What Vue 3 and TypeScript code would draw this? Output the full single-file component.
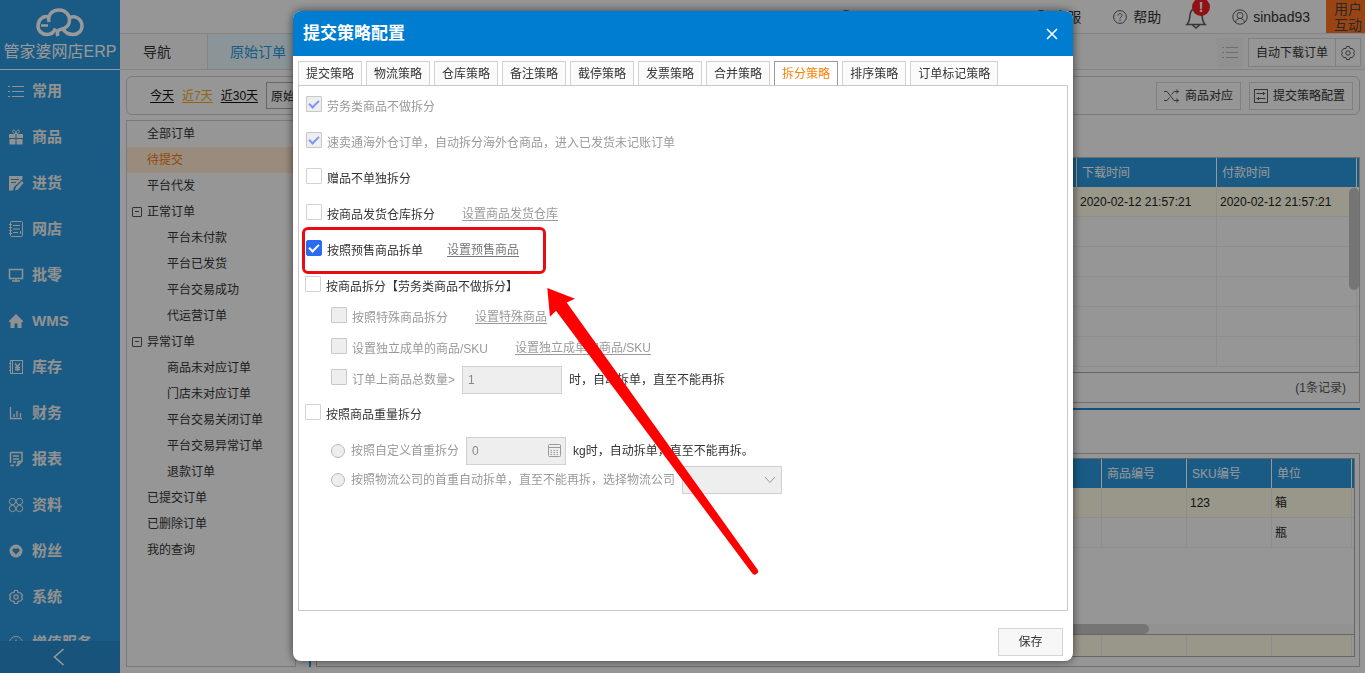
<script setup lang="ts">
import { ref } from 'vue'

interface NavItem { label: string; icon: string }
interface TreeNode { label: string; level: number; group?: boolean; active?: boolean }

const navItems: NavItem[] = [
  { label: '常用', icon: 'list' },
  { label: '商品', icon: 'gift' },
  { label: '进货', icon: 'edit' },
  { label: '网店', icon: 'book' },
  { label: '批零', icon: 'monitor' },
  { label: 'WMS', icon: 'home' },
  { label: '库存', icon: 'stock' },
  { label: '财务', icon: 'chart' },
  { label: '报表', icon: 'report' },
  { label: '资料', icon: 'clover' },
  { label: '粉丝', icon: 'heart' },
  { label: '系统', icon: 'gear' },
  { label: '增值服务', icon: 'plus' },
]

const tree: TreeNode[] = [
  { label: '全部订单', level: 1 },
  { label: '待提交', level: 1, active: true },
  { label: '平台代发', level: 1 },
  { label: '正常订单', level: 1, group: true },
  { label: '平台未付款', level: 2 },
  { label: '平台已发货', level: 2 },
  { label: '平台交易成功', level: 2 },
  { label: '代运营订单', level: 2 },
  { label: '异常订单', level: 1, group: true },
  { label: '商品未对应订单', level: 2 },
  { label: '门店未对应订单', level: 2 },
  { label: '平台交易关闭订单', level: 2 },
  { label: '平台交易异常订单', level: 2 },
  { label: '退款订单', level: 2 },
  { label: '已提交订单', level: 1 },
  { label: '已删除订单', level: 1 },
  { label: '我的查询', level: 1 },
]

const tabs = ['提交策略', '物流策略', '仓库策略', '备注策略', '截停策略', '发票策略', '合并策略', '拆分策略', '排序策略', '订单标记策略']
const activeTab = ref('拆分策略')
const giftAlone = ref(false)
const byWarehouse = ref(false)
const byPresale = ref(true)
const byGoods = ref(false)
const byWeight = ref(false)
</script>

<template>
  <div class="page">
    <aside class="sidebar">
      <div class="logo">
        <svg width="48" height="30" viewBox="0 0 48 30" fill="none" stroke="currentColor" stroke-width="3.500">
          <path d="M13 9C7 7 2 12 2 18C2 23 6 26.500 11 26.500C15 26.500 18 24 19.500 20.500" />
          <path d="M5 17.500H12" stroke-width="2.500" />
          <path d="M13 14C11.500 7 16 2 23 2C29.500 2 33.500 6.500 33.500 12C33.500 17 30 20.500 24.500 21.500C21.500 22 20.500 24.500 22 28" />
          <path d="M33 10C40 6.500 46 12 46 18C46 23 42 26.500 37 26.500C32 26.500 29 24.500 26.500 20.500" />
        </svg>
        <span>管家婆网店ERP</span>
      </div>
      <nav class="nav">
        <a v-for="item in navItems" :key="item.label" href="#" class="nav-item">
          <svg width="16" height="16" viewBox="0 0 16 16" fill="none" stroke="currentColor" stroke-width="1">
            <g v-if="item.icon === 'list'"><path d="M4 3.500H16M4 8.500H16M4 13.500H16M0 3.500H2M0 8.500H2M0 13.500H2" /></g>
            <g v-else-if="item.icon === 'gift'"><path d="M1 5H7.500V9H1ZM8.500 5H15V9H8.500ZM1.500 10H7.500V15.500H1.500ZM8.500 10H14.500V15.500H8.500Z" fill="currentColor" stroke="none" /><path d="M8 5C4 4 4 1 5.500 1S8 3 8 5C8 3 9 1 10.500 1S12 4 8 5" /></g>
            <g v-else-if="item.icon === 'edit'"><path d="M1 1H14.500V4L6 12L5 15.500H1Z" fill="currentColor" stroke="none" /><path d="M14 6L8 12L7 15.500L10 14.500L15.500 8Z" fill="currentColor" stroke="none" /><path d="M3 4.500H11M3 7.500H8" class="cut" /></g>
            <g v-else-if="item.icon === 'book'"><rect x="2.500" y="0.500" width="12" height="15" rx="1" /><path d="M5 4.500H12M5 8H12M5 11.500H10M1 3.500H4M1 6.500H4M1 9.500H4M1 12.500H4M12.500 10V13" /></g>
            <g v-else-if="item.icon === 'monitor'" stroke-width="1.500"><rect x="1.500" y="2.500" width="13" height="9" /><path d="M8 11.500V14M4 14H12" /></g>
            <g v-else-if="item.icon === 'home'"><path d="M8 1L15 8V9H13.500V15H9.500V10.500H6.500V15H2.500V9H1V8Z" fill="currentColor" stroke="none" /></g>
            <g v-else-if="item.icon === 'stock'"><rect x="2.500" y="1.500" width="12" height="13" /><path d="M4.500 2V14M1 4.500H3M1 8H3M1 11.500H3" /><path d="M7 4.500L9.500 7.500L12 4.500M9.500 7.500V12M7 8.500H12M7 10.500H12" stroke-width="1.300" /></g>
            <g v-else-if="item.icon === 'chart'" stroke-width="1.300"><path d="M2.500 2V13.500H14M6 12V9M9 12V6M12.500 12V8" /></g>
            <g v-else-if="item.icon === 'report'" stroke-width="1.500"><path d="M2.500 1.500H14V10L10 14.500H8M2.500 1.500V12M5 5H11M5 8H11M5 11H8M2.500 14.500H6M10 14V10.500H14" /></g>
            <g v-else-if="item.icon === 'clover'"><circle cx="4.500" cy="4.500" r="3.200" /><circle cx="11.500" cy="4.500" r="3.200" /><circle cx="4.500" cy="11.500" r="3.200" /><circle cx="11.500" cy="11.500" r="3.200" /></g>
            <g v-else-if="item.icon === 'heart'"><circle cx="8" cy="8" r="6.500" fill="currentColor" stroke="none" /><path d="M8 11.500L4.500 8C4 5.500 6.500 4.500 8 6C9.500 4.500 12 5.500 11.500 8Z" class="cut-fill" /></g>
            <g v-else-if="item.icon === 'gear'"><path d="M6.500 1.500H9.500L10 3.500L12.500 4L14.500 6L13.500 8L14.500 10L12.500 12L10 12.500L9.500 14.500H6.500L6 12.500L3.500 12L1.500 10L2.500 8L1.500 6L3.500 4L6 3.500Z" stroke-width="1.200" /><circle cx="8" cy="8" r="2.200" stroke-width="1.200" /></g>
            <g v-else><circle cx="8" cy="8" r="6.500" /><path d="M8 4.500V11.500M4.500 8H11.500" /></g>
          </svg>
          <span>{{ item.label }}</span>
        </a>
      </nav>
      <button class="collapse" aria-label="收起">
        <svg width="12" height="18" viewBox="0 0 12 18" fill="none" stroke="currentColor" stroke-width="1.600"><path d="M10.500 1L1.500 9L10.500 17" /></svg>
      </button>
    </aside>

    <main class="main">
      <header class="topbar">
        <span class="top-link phone"><svg width="14" height="14" viewBox="0 0 14 14" class="line-icon"><circle cx="7" cy="7" r="6.500" /></svg></span>
        <span class="top-link number">18621888875</span>
        <a href="#" class="top-link service"><svg width="14" height="14" viewBox="0 0 14 14" class="line-icon"><circle cx="7" cy="7" r="6.500" /></svg>客服</a>
        <a href="#" class="top-link help">
          <svg width="14" height="14" viewBox="0 0 14 14" class="line-icon"><circle cx="7" cy="7" r="6.400" /><path d="M5 5.500C5 3 9 3 9 5.500C9 7 7 7 7 8.500M7 9.500V11" /></svg>帮助</a>
        <button class="bell" aria-label="消息">
          <svg width="22" height="24" viewBox="0 0 22 24" class="line-icon bell-icon"><path d="M2 18.500C4.500 16 4.500 13 5 9C5.500 5 7.500 2.500 11 2.500S16.500 5 17 9C17.500 13 17.500 16 20 18.500ZM7.500 19L11 22L14.500 19" /></svg>
          <span class="badge">!</span>
        </button>
        <a href="#" class="top-link user">
          <svg width="16" height="16" viewBox="0 0 16 16" class="line-icon"><circle cx="8" cy="8" r="7.200" /><circle cx="8" cy="6.500" r="3" /><path d="M3.500 13.500C4 10.500 6 9.500 8 9.500S12 10.500 12.500 13.500" /></svg>sinbad93</a>
        <a href="#" class="feedback">用户<br />互动</a>
      </header>

      <div class="page-tabs">
        <a href="#" class="page-tab">导航</a>
        <a href="#" class="page-tab current">原始订单</a>
        <div class="tab-tools">
          <button class="menu-button" aria-label="列表">
            <svg width="16" height="14" viewBox="0 0 16 14" class="line-icon"><path d="M4 1.500H16M4 6.500H16M4 11.500H16M0 1.500H2M0 6.500H2M0 11.500H2" /></svg>
          </button>
          <button class="tool">自动下载订单</button>
          <button class="tool gear" aria-label="设置">
            <svg width="14" height="14" viewBox="0 0 14 14" class="line-icon"><path d="M5.500 0.500H8.500L9 2.500L11.500 2.500L13.500 5.500L12.500 7L13.500 8.500L11.500 11.500L9 11.500L8.500 13.500H5.500L5 11.500L2.500 11.500L0.500 8.500L1.500 7L0.500 5.500L2.500 2.500L5 2.500Z" /><circle cx="7" cy="7" r="2.200" /></svg>
          </button>
        </div>
      </div>

      <div class="filter">
        <a href="#">今天</a>
        <a href="#" class="picked">近7天</a>
        <a href="#">近30天</a>
        <div class="filter-fields">
          <input type="text" value="原始订单" aria-label="单据类型" />
        </div>
        <div class="filter-actions">
          <button class="tool">
            <svg width="16" height="14" viewBox="0 0 16 14" class="line-icon"><path d="M0 2.500H3L10 11.500H15M0 11.500H3L5.500 8.500M7.500 5.500L10 2.500H15M13 0.500V4.500M13 9.500V13.500" /></svg>商品对应</button>
          <button class="tool config">
            <svg width="14" height="14" viewBox="0 0 14 14" class="line-icon"><rect x="0.500" y="0.500" width="13" height="13" /><path d="M2.500 4.500H11.500M2.500 9.500H11.500M9.500 3V6M4.500 8V11" /></svg>提交策略配置</button>
        </div>
      </div>

      <div class="work">
        <ul class="tree">
          <li v-for="node in tree" :key="node.label" :class="['node', 'level-' + node.level, { active: node.active }]">
            <span v-if="node.group" class="toggle"></span>{{ node.label }}
          </li>
        </ul>
        <div class="splitter"></div>
        <section class="grids">
          <div class="orders">
            <table>
              <colgroup><col /><col class="w140" /><col class="w140" /><col class="w2" /></colgroup>
              <thead><tr><th></th><th>下载时间</th><th>付款时间</th><th></th></tr></thead>
              <tbody>
                <tr class="selected"><td></td><td>2020-02-12 21:57:21</td><td>2020-02-12 21:57:21</td><td></td></tr>
                <tr v-for="n in 5" :key="n"><td></td><td></td><td></td><td></td></tr>
              </tbody>
            </table>
            <div class="v-scroll"></div>
            <div class="count">(1条记录)</div>
          </div>
          <div class="divider"></div>
          <div class="details">
            <div class="details-frame">
              <table>
                <colgroup><col /><col class="w85" /><col class="w85" /><col class="w80" /><col class="w2" /></colgroup>
                <thead><tr><th></th><th>商品编号</th><th>SKU编号</th><th>单位</th><th></th></tr></thead>
                <tbody>
                  <tr class="selected"><td></td><td></td><td>123</td><td>箱</td><td></td></tr>
                  <tr><td></td><td></td><td></td><td>瓶</td><td></td></tr>
                </tbody>
              </table>
              <div class="h-scroll"><div class="thumb"></div></div>
              <table class="summary">
                <colgroup><col /><col class="w85" /><col class="w85" /><col class="w80" /><col class="w2" /></colgroup>
                <tbody><tr class="selected"><td></td><td></td><td></td><td></td><td></td></tr></tbody>
              </table>
            </div>
          </div>
        </section>
      </div>
    </main>

    <div class="mask">
      <div class="dialog" role="dialog" aria-labelledby="dialog-title">
        <header class="dialog-head">
          <h2 id="dialog-title">提交策略配置</h2>
          <button aria-label="关闭"><svg width="12" height="12" viewBox="0 0 12 12" fill="none" stroke="currentColor" stroke-width="1.600"><path d="M1 1L11 11M11 1L1 11" /></svg></button>
        </header>
        <div class="tabs" role="tablist">
          <button v-for="tab in tabs" :key="tab" role="tab" :class="['tab', { on: tab === activeTab }]" :aria-selected="tab === activeTab" @click="activeTab = tab">{{ tab }}</button>
        </div>
        <div class="panel">
          <div class="row"><label class="muted"><input type="checkbox" checked disabled />劳务类商品不做拆分</label></div>
          <div class="row"><label class="muted"><input type="checkbox" checked disabled />速卖通海外仓订单，自动拆分海外仓商品，进入已发货未记账订单</label></div>
          <div class="row"><label><input v-model="giftAlone" type="checkbox" />赠品不单独拆分</label></div>
          <div class="row"><label><input v-model="byWarehouse" type="checkbox" />按商品发货仓库拆分</label><a href="#" class="setting muted">设置商品发货仓库</a></div>
          <div class="row marked"><label><input v-model="byPresale" type="checkbox" />按照预售商品拆单</label><a href="#" class="setting near">设置预售商品</a></div>
          <div class="row wide"><label><input v-model="byGoods" type="checkbox" />按商品拆分【劳务类商品不做拆分】</label></div>
          <div class="sub goods">
            <div class="row"><label class="muted"><input type="checkbox" disabled />按照特殊商品拆分</label><a href="#" class="setting muted">设置特殊商品</a></div>
            <div class="row"><label class="muted"><input type="checkbox" disabled />设置独立成单的商品/SKU</label><a href="#" class="setting muted">设置独立成单的商品/SKU</a></div>
            <div class="row field-row"><label class="muted"><input type="checkbox" disabled />订单上商品总数量&gt;</label><input class="field" type="text" value="1" disabled aria-label="商品总数量" /><span>时，自动拆单，直至不能再拆</span></div>
          </div>
          <div class="row wide weight"><label><input v-model="byWeight" type="checkbox" />按照商品重量拆分</label></div>
          <div class="sub heavy">
            <div class="row field-row">
              <label class="muted"><input type="radio" name="weight" disabled />按照自定义首重拆分</label>
              <span class="calc">
                <input class="field" type="text" value="0" disabled aria-label="首重" />
                <svg width="13" height="13" viewBox="0 0 13 13" fill="none" stroke="currentColor"><rect x="0.500" y="0.500" width="12" height="12" rx="1" /><path d="M0 3.500H13" /><path d="M2.500 6.500H11M2.500 8.500H11M2.500 10.500H11" stroke-dasharray="1.500 1.500" /></svg>
              </span>
              <span>kg时，自动拆单，直至不能再拆。</span>
            </div>
            <div class="row field-row">
              <label class="muted"><input type="radio" name="weight" disabled />按照物流公司的首重自动拆单，直至不能再拆，选择物流公司</label>
              <span class="pick">
                <select class="field" disabled aria-label="物流公司"><option></option></select>
                <svg width="12" height="8" viewBox="0 0 12 8" fill="none" stroke="currentColor"><path d="M1 1L6 6.500L11 1" /></svg>
              </span>
            </div>
          </div>
        </div>
        <footer class="dialog-foot"><button>保存</button></footer>
        <svg class="arrow" width="214" height="290" viewBox="0 0 214 290"><path d="M0.300 1L28 11.700L19.700 15.500L210.500 282.500A3 3 0 0 1 205 286L9 23.700L3 29.700Z" fill="#fe0000" /></svg>
      </div>
    </div>
  </div>
</template>

<style>
body { margin: 0; overflow: hidden; }
</style>

<style scoped>
* { box-sizing: border-box; }
.page { display: flex; height: 100vh; overflow: hidden; background: #fafafa; color: #333; font: 12px/18px "Liberation Sans", "Noto Sans CJK SC", sans-serif; }
button, input, select { font: inherit; color: inherit; margin: 0; }
button { cursor: pointer; }
a { color: inherit; text-decoration: none; }
svg { flex: none; }
.line-icon { fill: none; stroke: currentColor; stroke-width: 1; opacity: .8; }

.sidebar { flex: none; width: 120px; display: flex; flex-direction: column; background: #2b98de; color: #fff; }
.logo { flex: none; height: 70px; padding-top: 8px; border-bottom: 1px solid #fff; display: flex; flex-direction: column; align-items: center; font-size: 16px; line-height: 24px; white-space: nowrap; gap: 2px; }
.nav { flex: 1; min-height: 0; overflow: hidden; }
.nav-item { display: flex; align-items: center; gap: 8px; height: 46px; padding: 0 0 4px 8px; font-size: 15px; font-weight: 700; color: #f2f2f2; }
.cut { stroke: #2b98de; }
.cut-fill { fill: #2b98de; stroke: none; }
.collapse { flex: none; height: 32px; border: 0; background: #278bcc; color: #fff; display: flex; align-items: center; justify-content: center; padding: 0 2px 0 0; }

.main { flex: 1; min-width: 0; display: flex; flex-direction: column; }
.topbar { flex: none; height: 34px; border-bottom: 1px solid #dcdcdc; display: flex; align-items: center; justify-content: flex-end; font-size: 14px; }
.top-link { display: flex; align-items: center; gap: 6px; }
.phone { margin-right: 48px; }
.number { margin-right: 48px; }
.service { gap: 5px; margin-right: 32px; }
.help { margin-right: 24px; }
.bell { position: relative; height: 33px; padding: 6px 0 0; border: 0; background: none; margin-right: 25px; }
.bell-icon { stroke-width: 1.6; }
.badge { position: absolute; left: 7px; top: -2px; width: 18px; height: 18px; border-radius: 9px; background: #f01f24; color: #fff; font-weight: 700; line-height: 18px; }
.user { margin-right: 16px; gap: 5px; }
.feedback { width: 39px; height: 33px; background: #ff7420; text-align: center; line-height: 16px; font-size: 14px; color: #444; padding: 1px 0 0 5px; }

.page-tabs { flex: none; height: 36px; display: flex; border-bottom: 1px solid #dcdcdc; background: #f7f7f7; font-size: 14px; }
.page-tab { display: flex; align-items: center; padding: 0 36px 0 23px; border-right: 1px solid #dcdcdc; }
.page-tab.current { background: #e6f7ff; color: #2b98de; padding: 0 22px; }
.tab-tools { margin-left: auto; padding: 4px 4px 2px 0; display: flex; font-size: 12px; }
.menu-button { width: 26px; border: 0; background: #f1f1f1; color: #aaa; padding: 0; margin-right: 5px; }
.menu-button svg { display: block; margin: auto; }
.tool { display: flex; align-items: center; gap: 5px; border: 1px solid #d5d5d5; background: #fafafa; padding: 0 7px; }
.tool.gear { padding: 0 5px; border-left: 0; }
.tool.config { padding-left: 4px; }

.filter { flex: none; height: 39px; margin: 6px 5px 5px 6px; padding: 0 6px 0 23px; border: 1px solid #ccc; border-radius: 6px; display: flex; align-items: center; gap: 8px; }
.filter > a { text-decoration: underline; text-underline-offset: 2px; color: #111; }
.filter > a.picked { color: #f5a623; }
.filter-fields { flex: 1; display: flex; }
.filter-fields input { width: 120px; height: 27px; border: 1px solid #aaa; background: none; padding: 0 4px; color: #222; }
.filter-actions { display: flex; gap: 8px; }
.filter-actions .tool { height: 28px; }

.work { flex: 1; min-height: 0; display: flex; padding: 0 5px 6px 6px; }
.tree { flex: none; width: 170px; margin: 0; padding: 0; list-style: none; border: 1px solid #ccc; }
.node { display: flex; align-items: center; height: 26px; position: relative; }
.level-1 { padding-left: 20px; }
.level-2 { padding-left: 40px; }
.node.active { background: #ffe8d0; color: #f57c0a; }
.toggle { position: absolute; left: 5px; top: 8px; width: 10px; height: 10px; border: 1px solid #555; border-radius: 1px; }
.toggle::after { content: ''; display: block; margin: 3px auto 0; width: 4px; height: 1px; background: #555; }
.splitter { flex: none; width: 2px; margin: 0 5px 0 13px; background: #2b98de; }
.grids { flex: 1; min-width: 0; display: flex; flex-direction: column; padding-top: 37px; }
table { width: 100%; table-layout: fixed; border-collapse: separate; border-spacing: 0; }
.w140 { width: 140px; }
.w85 { width: 85px; }
.w80 { width: 80px; }
.w2 { width: 2px; }
th { height: 29px; background: #2b98de; color: #fff; font-weight: 400; text-align: left; padding: 0 5px; border-right: 1px solid #fff; }
td { height: 30px; padding: 0 3px; border-right: 1px solid #ececec; border-bottom: 1px solid #ececec; color: #222; }
th:last-child, td:last-child { border-right: 0; padding: 0; }
.selected td { background: #fffbe6; }
.orders { position: relative; flex: none; height: 246px; border: 1px solid #bbb; display: flex; flex-direction: column; }
.v-scroll { position: absolute; right: 0; top: 30px; width: 10px; height: 102px; border-radius: 5px; background: #c4c4c4; }
.count { margin-top: auto; height: 30px; padding-right: 13px; border-top: 1px solid #aaa; text-align: right; line-height: 31px; color: #555; }
.divider { flex: none; height: 2px; margin: 5px 0 43px; background: #1e88d0; }
.details { flex: 1; min-height: 0; border: 1px solid #bbb; padding: 4px 4px 9px; }
.details-frame { height: 100%; border: 1px solid #aaa; display: flex; flex-direction: column; }
.h-scroll { margin-top: auto; height: 10px; background: #f3f3f3; }
.thumb { width: 827px; height: 10px; border-radius: 5px; background: #c4c4c4; }
.summary td { height: 21px; border-bottom: 0; }
.summary { flex: none; border-top: 1px solid #aaa; }

.mask { position: fixed; inset: 0; display: flex; align-items: center; justify-content: center; padding: 0 0 1px 1px; background: rgba(0, 0, 0, .4); }
.dialog { position: relative; width: 780px; height: 650px; display: flex; flex-direction: column; background: #fff; border-radius: 8px; box-shadow: 0 0 10px rgba(0, 0, 0, .6); }
.dialog-head { flex: none; height: 45px; border-radius: 8px 8px 0 0; background: #007dd0; color: #fff; display: flex; align-items: center; justify-content: space-between; padding: 0 9px 0 10px; }
.dialog-head h2 { margin: 0; font-size: 17px; line-height: 24px; font-weight: 700; }
.dialog-head button { width: 24px; height: 24px; padding: 0; border: 0; background: none; display: flex; align-items: center; justify-content: center; }
.tabs { flex: none; display: flex; gap: 4px; padding: 5px 5px 0; }
.tab { height: 24px; padding: 0 7px; border: 1px solid #d2d2d2; border-bottom: 0; background: #fbfbfb; line-height: 24px; }
.tab.on { color: #ff7e00; border-color: #999; background: #fff; }
.panel { flex: 1; min-height: 0; margin: 0 5px; border: 1px solid #c8c8c8; padding: 3px 7px 0; }
.row { display: flex; align-items: center; height: 36px; white-space: nowrap; }
.row label { display: flex; align-items: center; gap: 5px; }
.wide label { margin-left: -1px; }
.muted { color: #999; }
.setting { margin-left: 27px; padding-bottom: 2px; text-decoration: underline; text-underline-offset: 2px; }
.near { margin-left: 24px; color: #777; }
input[type="checkbox"] { appearance: none; flex: none; width: 16px; height: 16px; margin-bottom: 6px; border: 1px solid #d2d2d2; border-radius: 1px; background: #fff; display: grid; place-items: center; }
input[type="checkbox"]:disabled { background: #eee; border-color: #c8c8c8; }
input[type="checkbox"]:checked::after { content: ''; box-sizing: border-box; width: 10px; height: 6px; margin-bottom: 3px; border: solid #7b96f5; border-width: 0 0 2px 2px; transform: rotate(-45deg); }
input[type="checkbox"]:checked:enabled { background: #2b6bf3; border-color: #2b6bf3; border-radius: 2px; }
input[type="checkbox"]:checked:enabled::after { border-color: #fff; }
input[type="radio"] { appearance: none; flex: none; width: 14px; height: 14px; margin-right: 1px; border: 1px solid #b8b8b8; border-radius: 7px; background: #eee; }
.sub { padding-left: 25px; }
.goods { margin-top: -3px; }
.goods .row { height: 31px; }
.weight { margin-top: 2px; }
.heavy { margin-top: 3px; }
.heavy .row { height: 29px; }
.field-row { gap: 7px; }
.field { width: 100px; height: 28px; border: 1px solid #d0d0d0; border-radius: 0; background: #eee; color: #888; padding: 0 5px; opacity: 1; appearance: none; display: block; }
.calc, .pick { position: relative; color: #999; }
.calc svg { position: absolute; right: 5px; top: 7px; }
.pick svg { position: absolute; right: 6px; top: 10px; }
.marked { position: relative; }
.marked::after { content: ''; box-sizing: border-box; position: absolute; left: -4px; top: -6px; width: 244px; height: 47px; border: 3px solid #e60c12; border-radius: 6px; pointer-events: none; }
.dialog-foot { flex: none; height: 50px; display: flex; justify-content: flex-end; align-items: flex-end; padding: 0 10px 5px; }
.dialog-foot button { width: 65px; height: 28px; padding: 0; border: 1px solid #d5d5d5; background: #f7f7f7; }
.arrow { position: absolute; left: 254px; top: 276px; pointer-events: none; }
</style>
